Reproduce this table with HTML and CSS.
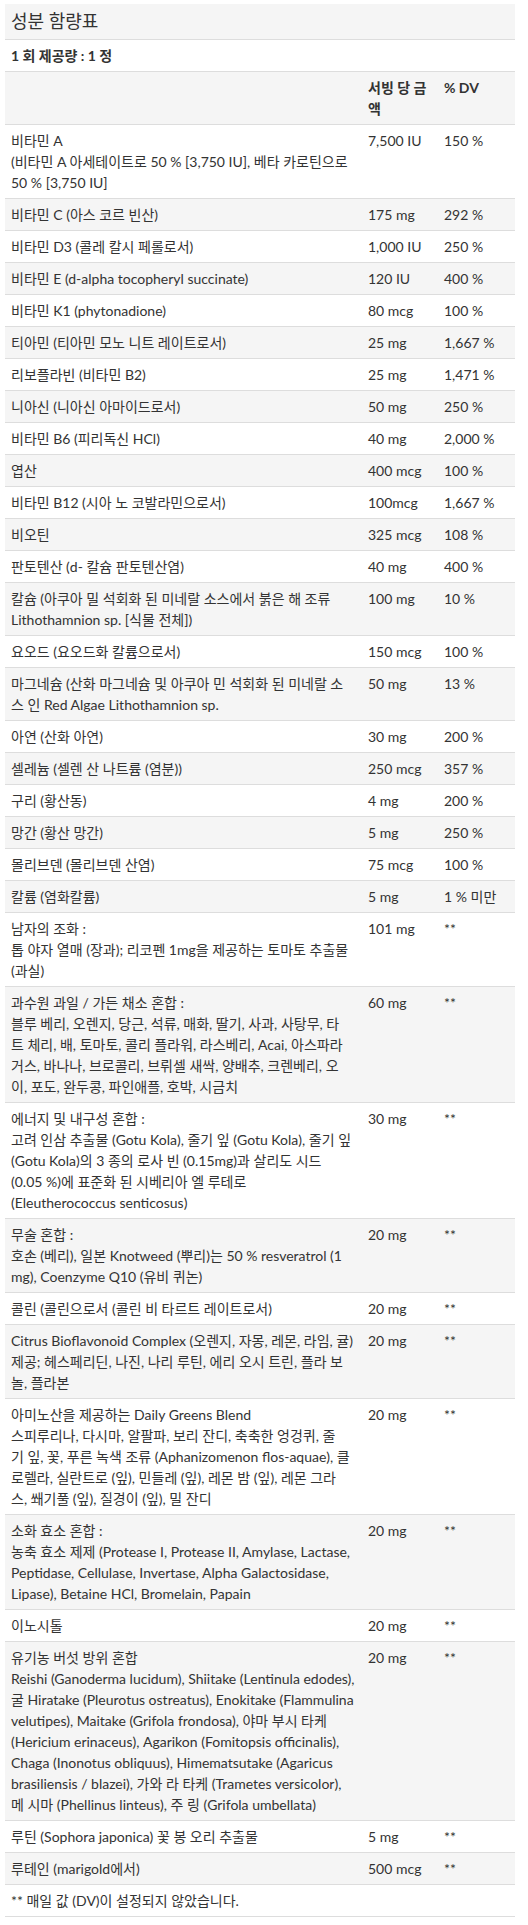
FILE: index.html
```html
<!DOCTYPE html>
<html lang="ko">
<head>
    <meta charset="UTF-8">
    <meta name="viewport" content="width=device-width, initial-scale=1.0">
    <title>성분 함량표</title>
    <link rel="stylesheet" href="styles.css">
</head>
<body>
    <div class="facts">
        <h2 class="facts-title">성분 함량표</h2>
        <p class="facts-serving">1 회 제공량 : 1 정</p>
        <table class="facts-table">
            <colgroup>
                <col class="col-name">
                <col class="col-amount">
                <col class="col-dv">
            </colgroup>
            <thead>
                <tr>
                    <th></th>
                    <th>서빙 당 금액</th>
                    <th>% DV</th>
                </tr>
            </thead>
            <tbody>
                <tr><td>비타민 A<br>(비타민 A 아세테이트로 50 % [3,750 IU], 베타 카로틴으로 50 % [3,750 IU]</td><td>7,500 IU</td><td>150 %</td></tr>
                <tr><td>비타민 C (아스 코르 빈산)</td><td>175 mg</td><td>292 %</td></tr>
                <tr><td>비타민 D3 (콜레 칼시 페롤로서)</td><td>1,000 IU</td><td>250 %</td></tr>
                <tr><td>비타민 E (d-alpha tocopheryl succinate)</td><td>120 IU</td><td>400 %</td></tr>
                <tr><td>비타민 K1 (phytonadione)</td><td>80 mcg</td><td>100 %</td></tr>
                <tr><td>티아민 (티아민 모노 니트 레이트로서)</td><td>25 mg</td><td>1,667 %</td></tr>
                <tr><td>리보플라빈 (비타민 B2)</td><td>25 mg</td><td>1,471 %</td></tr>
                <tr><td>니아신 (니아신 아마이드로서)</td><td>50 mg</td><td>250 %</td></tr>
                <tr><td>비타민 B6 (피리독신 HCl)</td><td>40 mg</td><td>2,000 %</td></tr>
                <tr><td>엽산</td><td>400 mcg</td><td>100 %</td></tr>
                <tr><td>비타민 B12 (시아 노 코발라민으로서)</td><td>100mcg</td><td>1,667 %</td></tr>
                <tr><td>비오틴</td><td>325 mcg</td><td>108 %</td></tr>
                <tr><td>판토텐산 (d- 칼슘 판토텐산염)</td><td>40 mg</td><td>400 %</td></tr>
                <tr><td>칼슘 (아쿠아 밀 석회화 된 미네랄 소스에서 붉은 해 조류 Lithothamnion sp. [식물 전체])</td><td>100 mg</td><td>10 %</td></tr>
                <tr><td>요오드 (요오드화 칼륨으로서)</td><td>150 mcg</td><td>100 %</td></tr>
                <tr><td>마그네슘 (산화 마그네슘 및 아쿠아 민 석회화 된 미네랄 소스 인 Red Algae Lithothamnion sp.</td><td>50 mg</td><td>13 %</td></tr>
                <tr><td>아연 (산화 아연)</td><td>30 mg</td><td>200 %</td></tr>
                <tr><td>셀레늄 (셀렌 산 나트륨 (염분))</td><td>250 mcg</td><td>357 %</td></tr>
                <tr><td>구리 (황산동)</td><td>4 mg</td><td>200 %</td></tr>
                <tr><td>망간 (황산 망간)</td><td>5 mg</td><td>250 %</td></tr>
                <tr><td>몰리브덴 (몰리브덴 산염)</td><td>75 mcg</td><td>100 %</td></tr>
                <tr><td>칼륨 (염화칼륨)</td><td>5 mg</td><td>1 % 미만</td></tr>
                <tr><td>남자의 조화 :<br>톱 야자 열매 (장과); 리코펜 1mg을 제공하는 토마토 추출물 (과실)</td><td>101 mg</td><td>**</td></tr>
                <tr><td>과수원 과일 / 가든 채소 혼합 :<br>블루 베리, 오렌지, 당근, 석류, 매화, 딸기, 사과, 사탕무, 타<br>트 체리, 배, 토마토, 콜리 플라워, 라스베리, Acai, 아스파라<br>거스, 바나나, 브로콜리, 브뤼셀 새싹, 양배추, 크렌베리, 오<br>이, 포도, 완두콩, 파인애플, 호박, 시금치</td><td>60 mg</td><td>**</td></tr>
                <tr><td>에너지 및 내구성 혼합 :<br>고려 인삼 추출물 (Gotu Kola), 줄기 잎 (Gotu Kola), 줄기 잎<br>(Gotu Kola)의 3 종의 로사 빈 (0.15mg)과 살리도 시드<br>(0.05 %)에 표준화 된 시베리아 엘 루테로<br>(Eleutherococcus senticosus)</td><td>30 mg</td><td>**</td></tr>
                <tr><td>무술 혼합 :<br>호손 (베리), 일본 Knotweed (뿌리)는 50 % resveratrol (1 mg), Coenzyme Q10 (유비 퀴논)</td><td>20 mg</td><td>**</td></tr>
                <tr><td>콜린 (콜린으로서 (콜린 비 타르트 레이트로서)</td><td>20 mg</td><td>**</td></tr>
                <tr><td>Citrus Bioflavonoid Complex (오렌지, 자몽, 레몬, 라임, 귤) 제공; 헤스페리딘, 나진, 나리 루틴, 에리 오시 트린, 플라 보놀, 플라본</td><td>20 mg</td><td>**</td></tr>
                <tr><td>아미노산을 제공하는 Daily Greens Blend<br>스피루리나, 다시마, 알팔파, 보리 잔디, 축축한 엉겅퀴, 줄<br>기 잎, 꽃, 푸른 녹색 조류 (Aphanizomenon flos-aquae), 클<br>로렐라, 실란트로 (잎), 민들레 (잎), 레몬 밤 (잎), 레몬 그라<br>스, 쐐기풀 (잎), 질경이 (잎), 밀 잔디</td><td>20 mg</td><td>**</td></tr>
                <tr><td>소화 효소 혼합 :<br>농축 효소 제제 (Protease I, Protease II, Amylase, Lactase, Peptidase, Cellulase, Invertase, Alpha Galactosidase, Lipase), Betaine HCl, Bromelain, Papain</td><td>20 mg</td><td>**</td></tr>
                <tr><td>이노시톨</td><td>20 mg</td><td>**</td></tr>
                <tr><td>유기농 버섯 방위 혼합<br>Reishi (Ganoderma lucidum), Shiitake (Lentinula edodes), 굴 Hiratake (Pleurotus ostreatus), Enokitake (Flammulina velutipes), Maitake (Grifola frondosa), 야마 부시 타케 (Hericium erinaceus), Agarikon (Fomitopsis officinalis), Chaga (Inonotus obliquus), Himematsutake (Agaricus brasiliensis / blazei), 가와 라 타케 (Trametes versicolor), 메 시마 (Phellinus linteus), 주 링 (Grifola umbellata)</td><td>20 mg</td><td>**</td></tr>
                <tr><td>루틴 (Sophora japonica) 꽃 봉 오리 추출물</td><td>5 mg</td><td>**</td></tr>
                <tr><td>루테인 (marigold에서)</td><td>500 mcg</td><td>**</td></tr>
                <tr><td colspan="3">** 매일 값 (DV)이 설정되지 않았습니다.</td></tr>
            </tbody>
        </table>
    </div>
</body>
</html>
```

FILE: styles.css
```css
body {
  margin: 0;
  background-color: #ffffff;
  color: #333333;
  font-family: Lato, "Noto Sans CJK KR", sans-serif;
  font-size: 14px;
  line-height: 21px;
}

.facts {
  width: 510px;
  margin: 4px 0 0 5px;
}

.facts-title {
  margin: 0;
  padding: 6px 6px;
  font-size: 18px;
  line-height: 23px;
  font-weight: normal;
  background-color: #f5f5f5;
  border-bottom: 1px solid #dddddd;
}

.facts-serving {
  margin: 0;
  padding: 5px 6px;
  font-weight: bold;
}

.facts-table {
  width: 100%;
  table-layout: fixed;
  border-collapse: collapse;
}

.col-name {
  width: 357px;
}

.col-amount {
  width: 76px;
}

.col-dv {
  width: 77px;
}

.facts-table th,
.facts-table td {
  padding: 5px 6px;
  text-align: left;
  vertical-align: top;
  border-top: 1px solid #dddddd;
}

.facts-table th {
  font-weight: bold;
}

.facts-table thead tr,
.facts-table tbody tr:nth-child(even) {
  background-color: #f5f5f5;
}

.facts-table tbody tr:last-child td {
  border-bottom: 1px solid #dddddd;
}
```
